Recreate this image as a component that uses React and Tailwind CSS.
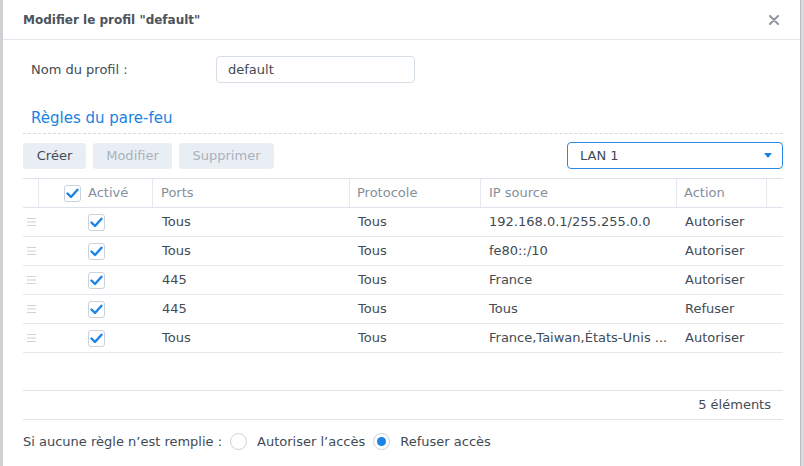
import React from 'react';

const rules = [
  { ports: 'Tous', proto: 'Tous', ip: '192.168.0.1/255.255.0.0', action: 'Autoriser' },
  { ports: 'Tous', proto: 'Tous', ip: 'fe80::/10', action: 'Autoriser' },
  { ports: '445', proto: 'Tous', ip: 'France', action: 'Autoriser' },
  { ports: '445', proto: 'Tous', ip: 'Tous', action: 'Refuser' },
  { ports: 'Tous', proto: 'Tous', ip: 'France,Taiwan,États-Unis ...', action: 'Autoriser' },
];

const cols = 'grid grid-cols-[16px_114px_197px_131px_196px_90px_16px]';

const Checkbox = () => (
  <span className="flex h-[17px] w-[17px] items-center justify-center rounded-[3px] border border-[#c9d2dd] bg-white">
    <svg width="13" height="11" viewBox="0 0 13 11">
      <path d="M1.5 5.5 L5 9 L11.5 1.8" fill="none" stroke="#1b84e6" strokeWidth="2.4" strokeLinecap="round" strokeLinejoin="round" />
    </svg>
  </span>
);

const DragHandle = () => (
  <svg width="9" height="8" viewBox="0 0 9 8">
    <path d="M0 0.5 H9 M0 4 H9 M0 7.5 H9" stroke="#cbd3dc" strokeWidth="1" />
  </svg>
);

const Radio = ({ checked }) => (
  <span className="flex h-[17px] w-[17px] items-center justify-center rounded-full border border-[#c9d2dd] bg-white">
    {checked && <span className="h-[9px] w-[9px] rounded-full bg-[#1b84e6]" />}
  </span>
);

export default function App() {
  return (
    <div className="flex h-[466px] w-[804px] overflow-hidden bg-white text-[13px] text-[#414b55]" style={{ fontFamily: '"DejaVu Sans", Verdana, sans-serif' }}>
      {/* background strip left */}
      <div className="w-[3px] bg-[#cfd2d4]" />

      <div className="flex w-[797px] flex-col bg-white">
        {/* header */}
        <div className="flex h-[40px] items-center justify-between border-b border-[#e3e6ea] pl-[20px] pr-[21px]">
          <span className="text-[12px] font-bold text-[#4c535c]">Modifier le profil "default"</span>
          <svg width="10" height="10" viewBox="0 0 10 10">
            <path d="M1 1 L9 9 M9 1 L1 9" stroke="#8e959d" strokeWidth="2" strokeLinecap="round" />
          </svg>
        </div>

        <div className="flex flex-1 flex-col pl-[20px] pr-[17px]">
          {/* profile name */}
          <div className="mt-[16px] flex h-[27px] items-center">
            <span className="w-[193px] pl-[8px]">Nom du profil :</span>
            <div className="flex h-[27px] w-[199px] items-center rounded-[4px] border border-[#d6dee8] pl-[11px]">default</div>
          </div>

          {/* section */}
          <div className="mt-[25px] border-b border-dashed border-[#d3d9e0] pb-[5px] pl-[8px] text-[15px] leading-[20px] text-[#1a82e3]">
            Règles du pare-feu
          </div>

          {/* toolbar */}
          <div className="mt-[8px] flex h-[27px] items-center justify-between">
            <div className="flex gap-[7px]">
              <button className="h-[26px] w-[63px] rounded-[3px] bg-[#e9eef4] text-[#414b55]">Créer</button>
              <button className="h-[26px] w-[79px] rounded-[3px] bg-[#e9eef4] text-[#a9b2bc]">Modifier</button>
              <button className="h-[26px] w-[95px] rounded-[3px] bg-[#e9eef4] text-[#a9b2bc]">Supprimer</button>
            </div>
            <div className="flex h-[27px] w-[216px] items-center justify-between rounded-[4px] border border-[#2a88e6] pl-[12px] pr-[10px]">
              <span>LAN 1</span>
              <svg width="8" height="5" viewBox="0 0 8 5">
                <path d="M0 0 H8 L4 5 Z" fill="#1a82e3" />
              </svg>
            </div>
          </div>

          {/* table */}
          <div className="mt-[9px] flex flex-1 flex-col border-t border-[#dde3ea]">
            <div className={`${cols} h-[29px] border-b border-[#dde3ea] text-[#858f9b]`}>
              <div className="border-r border-[#e6eaef]" />
              <div className="flex items-center gap-[7px] border-r border-[#e6eaef] pl-[25px]">
                <Checkbox />
                <span>Activé</span>
              </div>
              <div className="flex items-center border-r border-[#e6eaef] pl-[8px]">Ports</div>
              <div className="flex items-center border-r border-[#e6eaef] pl-[7px]">Protocole</div>
              <div className="flex items-center border-r border-[#e6eaef] pl-[8px]">IP source</div>
              <div className="flex items-center border-r border-[#e6eaef] pl-[7px]">Action</div>
              <div />
            </div>

            {rules.map((r, i) => (
              <div key={i} className={`${cols} h-[29px] border-b border-[#e6eaef]`}>
                <div className="flex items-center pl-[4px]">
                  <DragHandle />
                </div>
                <div className="flex items-center pl-[49px]">
                  <Checkbox />
                </div>
                <div className="flex items-center pl-[9px]">{r.ports}</div>
                <div className="flex items-center pl-[8px]">{r.proto}</div>
                <div className="flex items-center pl-[8px]">{r.ip}</div>
                <div className="flex items-center pl-[8px]">{r.action}</div>
                <div />
              </div>
            ))}

            <div className="flex-1" />

            <div className="flex h-[30px] items-center justify-end border-y border-[#dde3ea] pr-[12px]">
              5 éléments
            </div>
          </div>

          {/* footer */}
          <div className="flex h-[46px] items-center pb-[3px]">
            <span>Si aucune règle n’est remplie :</span>
            <span className="ml-[8px]"><Radio /></span>
            <span className="ml-[10px]">Autoriser l’accès</span>
            <span className="ml-[8px]"><Radio checked /></span>
            <span className="ml-[10px]">Refuser accès</span>
          </div>
        </div>
      </div>

      {/* background strip right */}
      <div className="w-[4px] border-l border-[#b9bdc1] bg-[#d9dcde]" />
    </div>
  );
}
